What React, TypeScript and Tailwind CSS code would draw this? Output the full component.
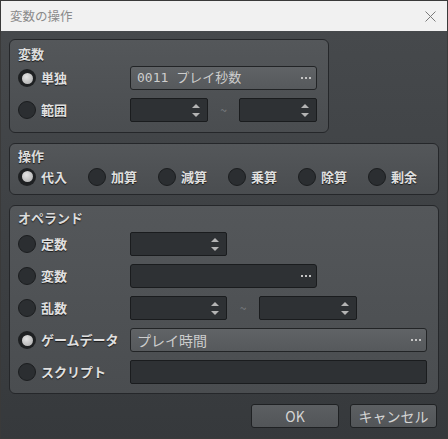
import type { ReactNode } from 'react'

const jp = "[font-family:'Noto_Sans_CJK_JP','Noto_Sans',sans-serif]"

function Radio({ checked = false }: { checked?: boolean }) {
  if (checked) {
    return (
      <div className="w-[18px] h-[18px] rounded-full bg-[#1e2022] flex items-center justify-center shrink-0">
        <div className="w-[11px] h-[11px] rounded-full bg-[radial-gradient(circle_at_40%_35%,#e4e4e4,#a8a8a8)]" />
      </div>
    )
  }
  return <div className="w-[18px] h-[18px] rounded-full bg-[#2b2e31] border border-[#1b1d1f] shrink-0" />
}

function Option({ label, checked, width }: { label: string; checked?: boolean; width: string }) {
  return (
    <div className={`flex items-center gap-[5px] ${width}`}>
      <Radio checked={checked} />
      <span className="text-[13px] font-semibold text-[#e0e0e0] [text-shadow:0_1px_1px_rgba(0,0,0,0.7)] whitespace-nowrap">
        {label}
      </span>
    </div>
  )
}

function Group({ title, className, children }: { title: string; className: string; children: ReactNode }) {
  return (
    <div
      className={`border border-[#25272a] rounded-[6px] bg-[linear-gradient(#54575a,#4a4d50)] px-[8px] ${className}`}
    >
      <div className="text-[13px] leading-[16px] font-bold text-[#dcdcdc] [text-shadow:0_1px_1px_rgba(0,0,0,0.7)]">
        {title}
      </div>
      {children}
    </div>
  )
}

function Spin({ width }: { width: string }) {
  return (
    <div
      className={`h-[24px] ${width} bg-[#2e3134] border border-[#1a1c1e] rounded-[2px] flex flex-col items-end justify-center gap-[5px] pr-[7px]`}
    >
      <div className="w-0 h-0 border-x-[4px] border-x-transparent border-b-[4px] border-b-[#b4b4b4]" />
      <div className="w-0 h-0 border-x-[4px] border-x-transparent border-t-[4px] border-t-[#b4b4b4]" />
    </div>
  )
}

function Dots() {
  return (
    <div className="flex gap-[2px] ml-auto">
      <div className="w-[2px] h-[2px] bg-[#c4c4c4]" />
      <div className="w-[2px] h-[2px] bg-[#c4c4c4]" />
      <div className="w-[2px] h-[2px] bg-[#c4c4c4]" />
    </div>
  )
}

function Picker({ width, text, light, mono }: { width: string; text?: string; light?: boolean; mono?: boolean }) {
  const bg = light
    ? 'bg-[linear-gradient(#606366,#56595c)] border-[#222426]'
    : 'bg-[#2e3134] border-[#1a1c1e]'
  return (
    <div className={`h-[24px] ${width} ${bg} border rounded-[3px] flex items-center pl-[6px] pr-[5px]`}>
      {text && (
        <span
          className={`text-[#cdcdcd] ${mono ? "[font-family:'DejaVu_Sans_Mono','Noto_Sans_CJK_JP',monospace] text-[13px]" : 'text-[14px]'}`}
        >
          {text}
        </span>
      )}
      <Dots />
    </div>
  )
}

function Tilde({ className }: { className: string }) {
  return <span className={`text-[12px] text-[#7c7f82] ${className}`}>~</span>
}

function Row({ children }: { children: ReactNode }) {
  return <div className="flex items-center h-[24px]">{children}</div>
}

export default function App() {
  return (
    <div className={`w-[448px] h-[439px] border border-[#3a3a3a] flex flex-col overflow-hidden ${jp}`}>
      {/* title bar */}
      <div className="h-[30px] bg-[#f1f1f1] flex items-center justify-between pl-[9px] pr-[10px] shrink-0">
        <span className="text-[12.5px] text-[#8a8a8a]">変数の操作</span>
        <svg width="11" height="11" viewBox="0 0 11 11" className="mr-[1px]">
          <path d="M0.5 0.5 L10.5 10.5 M10.5 0.5 L0.5 10.5" stroke="#7a7a7a" strokeWidth="1" />
        </svg>
      </div>

      <div className="flex-1 bg-[linear-gradient(#46494c,#36393c)] pl-[8px] pr-[8px] pt-[8px] flex flex-col">
        <Group title="変数" className="w-[320px] h-[94px] pt-[6px]">
          <div className="mt-[4px] flex flex-col gap-[8px]">
            <Row>
              <Option label="単独" checked width="w-[112px]" />
              <Picker width="w-[187px]" text="0011 プレイ秒数" light mono />
            </Row>
            <Row>
              <Option label="範囲" width="w-[112px]" />
              <Spin width="w-[78px]" />
              <Tilde className="w-[31px] text-center" />
              <Spin width="w-[78px]" />
            </Row>
          </div>
        </Group>

        <Group title="操作" className="w-[430px] h-[52px] mt-[10px] pt-[4px]">
          <div className="mt-[3px] flex items-center">
            <Option label="代入" checked width="w-[70px]" />
            <Option label="加算" width="w-[70px]" />
            <Option label="減算" width="w-[70px]" />
            <Option label="乗算" width="w-[70px]" />
            <Option label="除算" width="w-[70px]" />
            <Option label="剰余" width="w-[60px]" />
          </div>
        </Group>

        <Group title="オペランド" className="w-[430px] h-[189px] mt-[10px] pt-[4px]">
          <div className="mt-[6px] flex flex-col gap-[8px]">
            <Row>
              <Option label="定数" width="w-[112px]" />
              <Spin width="w-[97px]" />
            </Row>
            <Row>
              <Option label="変数" width="w-[112px]" />
              <Picker width="w-[187px]" />
            </Row>
            <Row>
              <Option label="乱数" width="w-[112px]" />
              <Spin width="w-[97px]" />
              <Tilde className="w-[32px] text-center" />
              <Spin width="w-[98px]" />
            </Row>
            <Row>
              <Option label="ゲームデータ" checked width="w-[112px]" />
              <Picker width="w-[297px]" text="プレイ時間" light />
            </Row>
            <Row>
              <Option label="スクリプト" width="w-[112px]" />
              <div className="h-[24px] w-[297px] bg-[#2e3134] border border-[#1a1c1e] rounded-[2px]" />
            </Row>
          </div>
        </Group>

        <div className="mt-[10px] flex justify-end gap-[11px] pr-[2px]">
          <button className="w-[88px] h-[24px] rounded-[3px] border border-[#1f2123] bg-[linear-gradient(#5c5f62,#525558)] text-[14px] text-[#d4d4d4]">
            OK
          </button>
          <button className="w-[87px] h-[24px] rounded-[3px] border border-[#1f2123] bg-[linear-gradient(#5c5f62,#525558)] text-[14px] text-[#d4d4d4]">
            キャンセル
          </button>
        </div>
      </div>
    </div>
  )
}
